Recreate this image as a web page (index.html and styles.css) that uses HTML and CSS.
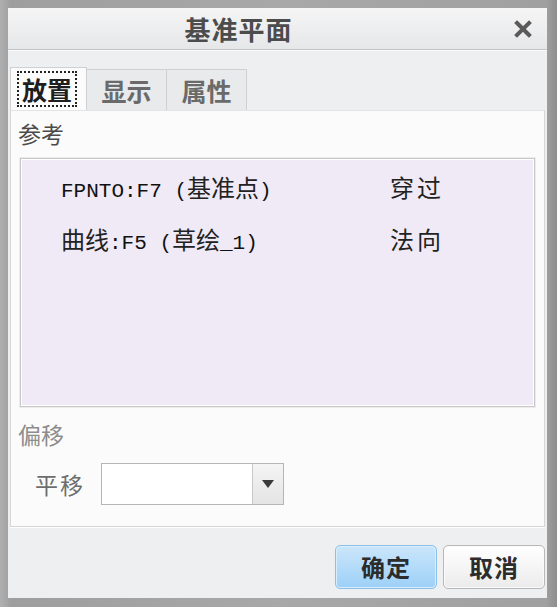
FILE: index.html
```html
<!DOCTYPE html>
<html lang="zh">
<head>
<meta charset="utf-8">
<title>基准平面</title>
<link rel="stylesheet" href="styles.css">
</head>
<body>
<div class="window">
  <div class="titlebar">
    <span class="title">基准平面</span>
    <svg class="close" width="18" height="18" viewBox="0 0 18 18"><path d="M3 3L15 15M15 3L3 15" stroke="#5a5a5a" stroke-width="4" stroke-linecap="square"/></svg>
  </div>
  <div class="content">
    <div class="tabs">
      <div class="tab active"><span class="focus">放置</span></div>
      <div class="tab">显示</div>
      <div class="tab">属性</div>
    </div>
    <div class="panel">
      <div class="label">参考</div>
      <div class="list">
        <div class="row"><span class="ref"><span class="lat">FPNTO:F7 (</span>基准点<span class="lat">)</span></span><span class="how">穿过</span></div>
        <div class="row"><span class="ref">曲线<span class="lat">:F5 (</span>草绘<span class="lat">_1)</span></span><span class="how">法向</span></div>
      </div>
      <div class="label muted">偏移</div>
      <div class="offset">
        <span class="olabel">平移</span>
        <div class="combo"><div class="combo-field"></div><div class="combo-btn"><svg width="12" height="8" viewBox="0 0 12 8"><path d="M0 0H12L6 8Z" fill="#3a3a3a"/></svg></div></div>
      </div>
    </div>
    <div class="footer">
      <button class="btn primary">确定</button>
      <button class="btn">取消</button>
    </div>
  </div>
</div>
</body>
</html>
```

FILE: styles.css
```css
* { box-sizing: border-box; }
html, body { margin: 0; padding: 0; }
body {
  width: 557px;
  height: 607px;
  font-family: "Noto Sans CJK SC", "Liberation Sans", sans-serif;
  background: #a6a6a6;
}
.window {
  width: 557px;
  height: 607px;
  background: linear-gradient(to right, #b0b0b0, #9e9e9e 2%, #a8a8a8 50%, #a0a0a0 98%, #8e8e8e);
  padding: 8px 10px 9px 8px;
  display: flex;
  flex-direction: column;
}
.titlebar {
  height: 42px;
  background: linear-gradient(to bottom, #f5f5f6, #e6e7e8);
  border-bottom: 1px solid #c4c4c4;
  position: relative;
  display: flex;
  align-items: center;
  justify-content: center;
  flex: none;
}
.title {
  font-size: 26px;
  font-weight: 700;
  color: #4c4c4c;
  letter-spacing: 1px;
  margin-left: -78px;
  line-height: 1;
}
.close {
  position: absolute;
  right: 15px;
  top: 12px;
}
.content {
  flex: 1;
  background: #eeeff1;
  border-top: 1px solid #fafafa;
  display: flex;
  flex-direction: column;
  padding: 16px 2px 0 2px;
}
.tabs {
  display: flex;
  align-items: flex-end;
  height: 43px;
  flex: none;
}
.tab {
  height: 41px;
  width: 81px;
  border: 1px solid #cfd0d2;
  border-bottom: none;
  background: #e9eaec;
  color: #6a6a6a;
  font-size: 25px;
  font-weight: 700;
  display: flex;
  align-items: center;
  justify-content: center;
  line-height: 1;
}
.tab + .tab { border-left: none; width: 80px; }
.tab.active {
  height: 43px;
  width: 77px;
  background: #fbfbfb;
  color: #1e1e1e;
  justify-content: flex-start;
  padding-left: 6px;
}
.focus {
  border: 2px dotted #222;
  padding: 4px 3px 3px 3px;
  font-size: 25px;
}
.panel {
  height: 417px;
  background: #fbfbfb;
  border: 1px solid #d6d6d8;
  border-top-color: #e4e4e4;
  padding: 8px 9px 0 7px;
  display: flex;
  flex-direction: column;
  flex: none;
}
.label {
  font-size: 23px;
  color: #4a4a4a;
  line-height: 28px;
  height: 28px;
}
.label.muted { color: #8d8d8d; margin-top: 13px; }
.list {
  margin: 11px 0 0 2px;
  height: 249px;
  background: #efeaf6;
  border: 1px solid #c8c8c8;
  box-shadow: inset 0 0 0 1px #ffffff, 0 0 0 1px #ececec;
  padding-top: 1px;
  flex: none;
}
.row {
  display: flex;
  align-items: center;
  height: 52px;
  font-size: 24px;
  color: #222222;
}
.ref { width: 369px; padding-left: 40px; white-space: nowrap; }
.lat { font-family: "Liberation Mono", monospace; font-size: 21px; color: #111111; }
.how { letter-spacing: 3px; }
.offset {
  display: flex;
  align-items: center;
  margin-top: 14px;
  height: 43px;
}
.olabel {
  font-size: 23px;
  color: #6e6e6e;
  margin-left: 17px;
  width: 66px;
  letter-spacing: 2px;
}
.combo {
  display: flex;
  height: 42px;
  width: 183px;
  border: 1px solid #b6b6b6;
  background: #fff;
}
.combo-field { flex: 1; background: #fff; border-right: 1px solid #c8c8c8; }
.combo-btn {
  width: 30px;
  background: linear-gradient(to bottom, #f4f4f4, #e4e4e4);
  display: flex;
  align-items: center;
  justify-content: center;
}
.footer {
  flex: 1;
  display: flex;
  justify-content: flex-end;
  align-items: flex-start;
  gap: 6px;
  padding: 17px 0 0 0;
  border-top: 1px solid #fdfdfd;
}
.btn {
  font-family: "Noto Sans CJK SC", sans-serif;
  height: 44px;
  width: 102px;
  font-size: 24px;
  font-weight: 700;
  color: #2c2c2c;
  border: 1px solid #b8b8b8;
  border-radius: 5px;
  background: linear-gradient(to bottom, #ffffff, #ebebeb);
  box-shadow: inset 0 0 0 1px #fafafa;
  line-height: 1;
  padding: 0;
  letter-spacing: 1px;
}
.btn.primary {
  background: linear-gradient(to bottom, #cbe6fb, #9dd0f7);
  border-color: #8cc0e8;
  box-shadow: inset 0 0 0 1px #d8eefc;
}
```
